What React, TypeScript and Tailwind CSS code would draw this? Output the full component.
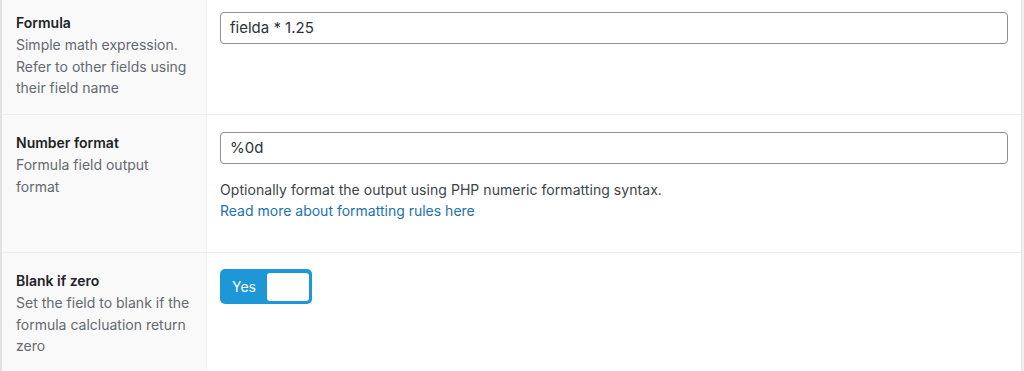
export default function App() {
  return (
    <div className="w-[1024px] h-[371px] overflow-hidden bg-[#f0f0f1] font-['Inter','Noto_Sans',sans-serif] text-[14px] text-[#3c434a]">
      <div className="w-[1022px] h-[376px] bg-white border-l-2 border-r border-[#e2e2e4] -mt-[5px] flex flex-col">
        {/* Formula */}
        <div className="flex h-[120px] shrink-0 border-b border-[#eeeeef]">
          <div className="w-[205px] shrink-0 bg-[#f9f9f9] border-r border-[#eeeeef] pl-[14px] pr-3 pt-[17px]">
            <p className="font-semibold text-[#1d2327] leading-[22px]">Formula</p>
            <p className="text-[#646970] leading-[21.5px]">
              Simple math expression. Refer to other fields using their field name
            </p>
          </div>
          <div className="flex-1 pl-[13px] pr-[13px] pt-[17px]">
            <div className="h-[32px] border border-[#8c8f94] rounded-[4px] px-[9px] flex items-center text-[15px] text-[#2c3338]">
              fielda * 1.25
            </div>
          </div>
        </div>

        {/* Number format */}
        <div className="flex h-[138px] shrink-0 border-b border-[#eeeeef]">
          <div className="w-[205px] shrink-0 bg-[#f9f9f9] border-r border-[#eeeeef] pl-[14px] pr-3 pt-[17px]">
            <p className="font-semibold text-[#1d2327] leading-[22px]">Number format</p>
            <p className="text-[#646970] leading-[21.5px]">Formula field output format</p>
          </div>
          <div className="flex-1 pl-[13px] pr-[13px] pt-[17px]">
            <div className="h-[32px] border border-[#8c8f94] rounded-[4px] px-[9px] flex items-center text-[15px] text-[#2c3338]">
              %0d
            </div>
            <p className="mt-[15px] leading-[21px] tracking-[0.05px]">
              Optionally format the output using PHP numeric formatting syntax.
            </p>
            <a href="#" className="block leading-[21px] text-[#2271b1]">
              Read more about formatting rules here
            </a>
          </div>
        </div>

        {/* Blank if zero */}
        <div className="flex flex-1">
          <div className="w-[205px] shrink-0 bg-[#f9f9f9] border-r border-[#eeeeef] pl-[14px] pr-3 pt-[17px]">
            <p className="font-semibold text-[#1d2327] leading-[22px]">Blank if zero</p>
            <p className="text-[#646970] leading-[21.5px]">
              Set the field to blank if the formula calcluation return zero
            </p>
          </div>
          <div className="flex-1 pl-[13px] pt-[16px]">
            <div className="w-[92px] h-[35px] rounded-[5px] bg-[#1e97d6] flex items-center justify-between pl-[12px] pr-[3px]">
              <span className="text-white text-[14px]">Yes</span>
              <span className="w-[42px] h-[28px] bg-white rounded-[3px]" />
            </div>
          </div>
        </div>
      </div>
    </div>
  );
}
